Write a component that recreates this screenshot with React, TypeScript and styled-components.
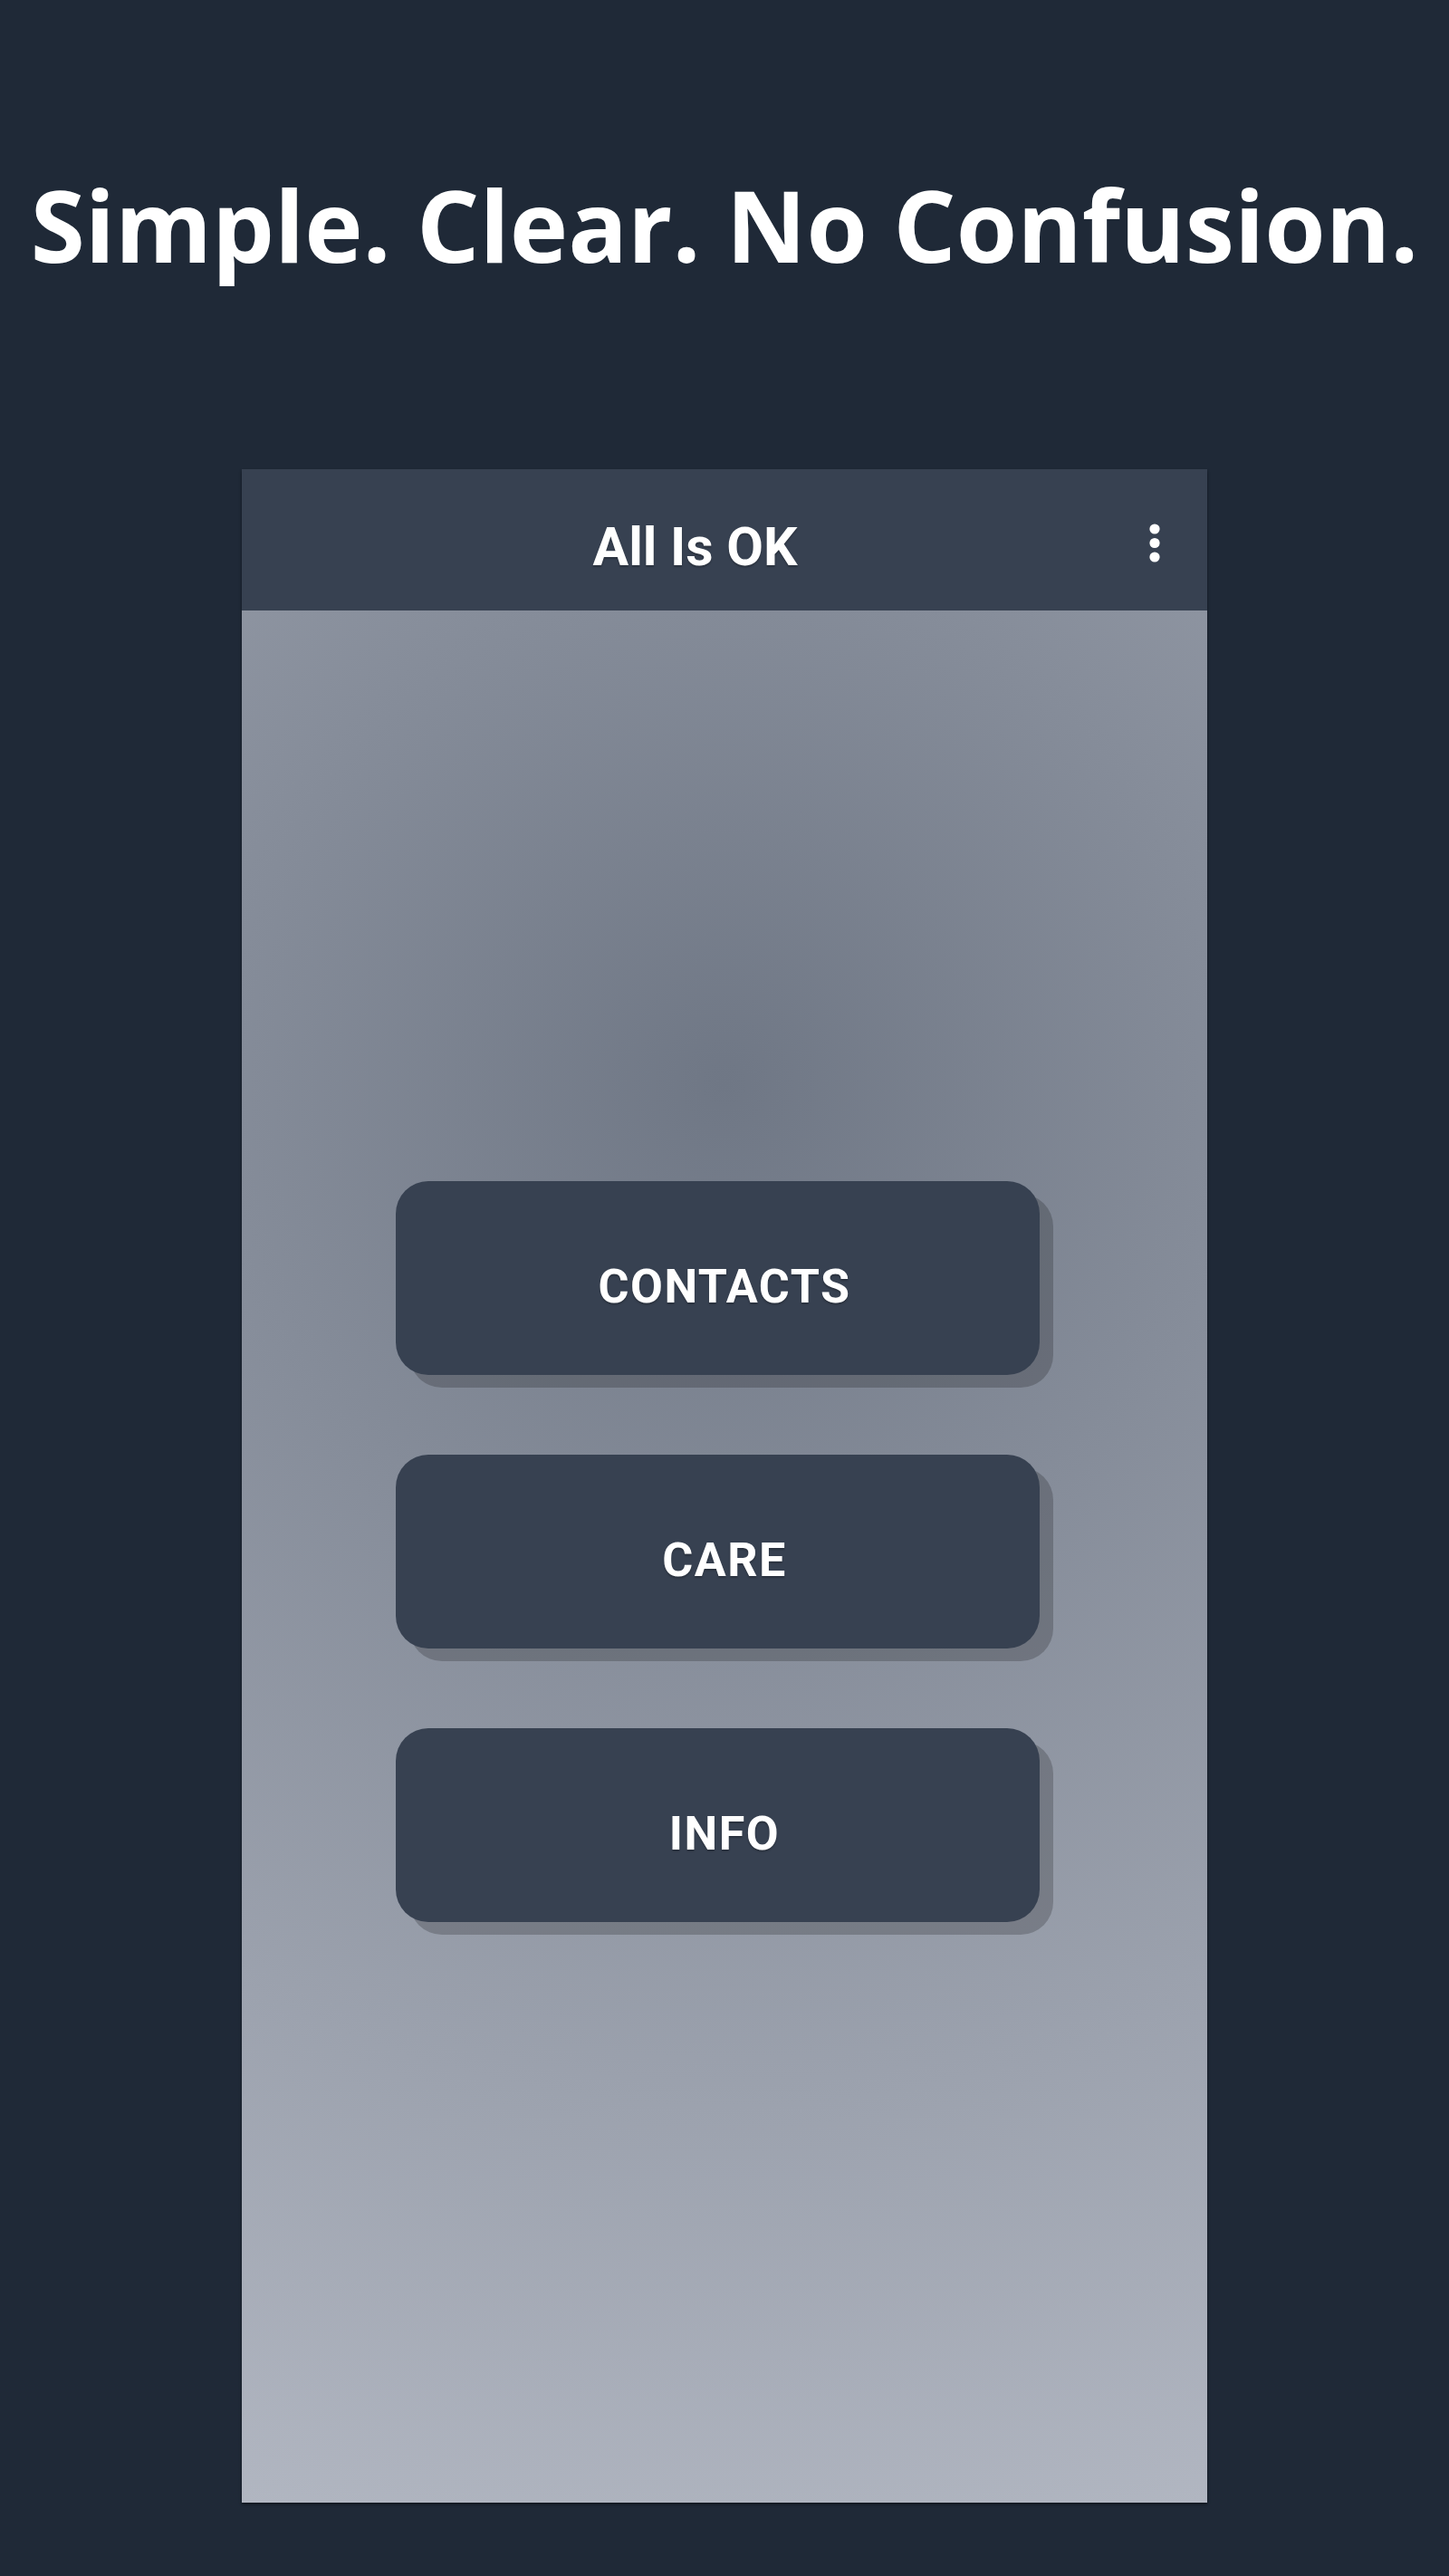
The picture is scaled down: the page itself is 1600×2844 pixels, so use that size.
import React from "react";
import styled, { createGlobalStyle } from "styled-components";

const GlobalStyle = createGlobalStyle`
  html, body {
    margin: 0;
    padding: 0;
    background: #1f2937;
  }
  * { box-sizing: border-box; }
`;

const Page = styled.div`
  min-height: 2844px;
  background: #1f2937;
  display: flex;
  flex-direction: column;
  align-items: center;
  padding-top: 193px;
`;

const Headline = styled.h1`
  margin: 0 0 215px;
  font-family: "Open Sans", "Noto Sans", sans-serif;
  font-weight: 700;
  font-size: 109px;
  line-height: 110px;
  color: #ffffff;
  text-align: center;
  white-space: nowrap;
`;

const Phone = styled.div`
  width: 1066px;
  height: 2245px;
  display: flex;
  flex-direction: column;
  box-shadow: 0 2px 3px rgba(0, 0, 0, 0.45);
`;

const AppBar = styled.header`
  height: 156px;
  flex: none;
  background: #374151;
  display: flex;
  align-items: center;
  padding: 14px 51px 0 0;
`;

const AppTitle = styled.div`
  flex: 1;
  text-align: center;
  font-family: Roboto, "Liberation Sans", sans-serif;
  font-weight: 700;
  font-size: 59px;
  color: #ffffff;
  text-shadow: 0 2px 2px rgba(0, 0, 0, 0.25);
`;

const MenuButton = styled.button`
  width: 14px;
  height: 46px;
  padding: 0;
  border: 0;
  background: transparent;
  display: flex;
  align-items: center;
  justify-content: center;
  margin-top: -6px;
`;

const Content = styled.main`
  flex: 1;
  display: flex;
  flex-direction: column;
  align-items: center;
  justify-content: center;
  gap: 88px;
  padding-bottom: 12px;
  background: radial-gradient(circle at 533px 523px, #6f7785 0px, #b2b7c2 1680px);
`;

const BigButton = styled.button`
  width: 711px;
  height: 214px;
  margin-right: 15px;
  border: 0;
  border-radius: 36px;
  background: #374151;
  box-shadow: 15px 14px 0 rgba(0, 0, 0, 0.2);
  color: #ffffff;
  font-family: Roboto, "Liberation Sans", sans-serif;
  font-weight: 700;
  font-size: 52px;
  letter-spacing: 1.5px;
  padding: 19px 0 0 15px;
  display: flex;
  align-items: center;
  justify-content: center;
  text-shadow: 0 2px 2px rgba(0, 0, 0, 0.25);
  cursor: pointer;
`;

const DotsIcon = () => (
  <svg width="14" height="46" viewBox="0 0 14 46" aria-hidden="true">
    <circle cx="7" cy="7" r="5.6" fill="#ffffff" />
    <circle cx="7" cy="22.5" r="5.6" fill="#ffffff" />
    <circle cx="7" cy="38" r="5.6" fill="#ffffff" />
  </svg>
);

const items = ["CONTACTS", "CARE", "INFO"];

export default function App() {
  return (
    <>
      <GlobalStyle />
      <Page>
        <Headline>Simple. Clear. No Confusion.</Headline>
        <Phone>
          <AppBar>
            <AppTitle>All Is OK</AppTitle>
            <MenuButton aria-label="More options">
              <DotsIcon />
            </MenuButton>
          </AppBar>
          <Content>
            {items.map((label) => (
              <BigButton key={label}>{label}</BigButton>
            ))}
          </Content>
        </Phone>
      </Page>
    </>
  );
}
